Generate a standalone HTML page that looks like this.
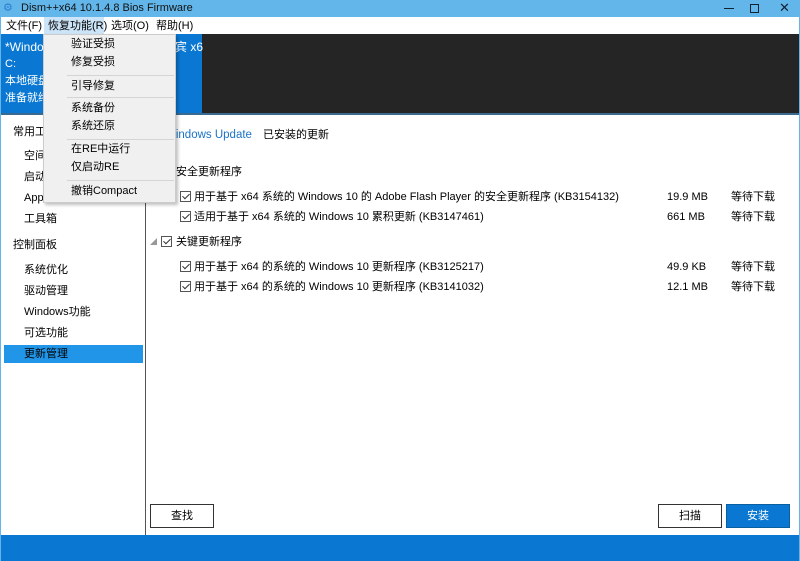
<!DOCTYPE html>
<html><head><meta charset="utf-8"><style>
*{margin:0;padding:0;box-sizing:border-box}
body{width:800px;height:561px;overflow:hidden;position:relative;background:#fff;font-family:"Liberation Sans","Noto Sans CJK SC",sans-serif;font-size:11px;color:#000}
.a{position:absolute;white-space:nowrap;line-height:14px}
.cb{position:absolute;width:11px;height:11px;border:1px solid #555;background:#fff}
.cb:after{content:"";position:absolute;left:3px;top:0px;width:3px;height:6px;border:solid #333;border-width:0 1.3px 1.3px 0;transform:rotate(45deg)}
.btn{position:absolute;height:24px;border:1px solid #333;background:#fff;text-align:center;line-height:22px}
</style></head><body>
<div class="a" style="left:0;top:0;width:800px;height:17px;background:#63b6ea"></div>
<div class="a" style="left:3px;top:1px;color:#2a7fd0;font-size:11px">⚙</div>
<div class="a" style="left:21px;top:1px;font-size:11px;color:#111">Dism++x64 10.1.4.8 Bios Firmware</div>
<div class="a" style="left:724px;top:8px;width:10px;height:1px;background:#123"></div>
<div class="a" style="left:750px;top:4px;width:9px;height:9px;border:1px solid #123"></div>
<div class="a" style="left:779px;top:1px;font-size:13px;color:#123">✕</div>
<div class="a" style="left:0;top:17px;width:800px;height:17px;background:#fff"></div>
<div class="a" style="left:6px;top:19px">文件(F)</div>
<div class="a" style="left:44px;top:17px;width:60px;height:17px;background:#cce4f7"></div>
<div class="a" style="left:48px;top:19px">恢复功能(R)</div>
<div class="a" style="left:111px;top:19px">选项(O)</div>
<div class="a" style="left:156px;top:19px">帮助(H)</div>
<div class="a" style="left:0;top:34px;width:800px;height:80px;background:#252525"></div>
<div class="a" style="left:0;top:34px;width:202px;height:80px;background:#0a78d2"></div>
<div class="a" style="left:0;top:113px;width:800px;height:2px;background:#3a6a90"></div>
<div class="a" style="left:5px;top:40px;color:#fff;font-size:12px">*Windows</div>
<div class="a" style="left:175px;top:40px;color:#fff;font-size:12px">宾 x6</div>
<div class="a" style="left:5px;top:57px;color:#fff">C:</div>
<div class="a" style="left:5px;top:74px;color:#fff">本地硬盘</div>
<div class="a" style="left:5px;top:91px;color:#fff">准备就绪</div>
<div class="a" style="left:145px;top:115px;width:1px;height:420px;background:#555"></div>
<div class="a" style="left:13px;top:125px">常用工具</div>
<div class="a" style="left:24px;top:149px">空间</div>
<div class="a" style="left:24px;top:170px">启动</div>
<div class="a" style="left:24px;top:191px">App</div>
<div class="a" style="left:24px;top:212px">工具箱</div>
<div class="a" style="left:13px;top:238px">控制面板</div>
<div class="a" style="left:24px;top:263px">系统优化</div>
<div class="a" style="left:24px;top:284px">驱动管理</div>
<div class="a" style="left:24px;top:305px">Windows功能</div>
<div class="a" style="left:24px;top:326px">可选功能</div>
<div class="a" style="left:4px;top:345px;width:139px;height:18px;background:#2196e8"></div>
<div class="a" style="left:24px;top:347px">更新管理</div>
<div class="a" style="left:165px;top:128px;color:#1a73c8;font-size:11.5px">Windows Update</div>
<div class="a" style="left:263px;top:128px">已安装的更新</div>
<div class="a" style="left:176px;top:165px">安全更新程序</div>
<div class="cb" style="left:180px;top:191px"></div>
<div class="a" style="left:194px;top:190px">用于基于 x64 系统的 Windows 10 的 Adobe Flash Player 的安全更新程序 (KB3154132)</div>
<div class="a" style="left:667px;top:190px">19.9 MB</div><div class="a" style="left:731px;top:190px">等待下载</div>
<div class="cb" style="left:180px;top:211px"></div>
<div class="a" style="left:194px;top:210px">适用于基于 x64 系统的 Windows 10 累积更新 (KB3147461)</div>
<div class="a" style="left:667px;top:210px">661 MB</div><div class="a" style="left:731px;top:210px">等待下载</div>
<div class="a" style="left:150px;top:236px;font-size:7px;color:#999">◢</div>
<div class="cb" style="left:161px;top:236px"></div>
<div class="a" style="left:176px;top:235px">关键更新程序</div>
<div class="cb" style="left:180px;top:261px"></div>
<div class="a" style="left:194px;top:260px">用于基于 x64 的系统的 Windows 10 更新程序 (KB3125217)</div>
<div class="a" style="left:667px;top:260px">49.9 KB</div><div class="a" style="left:731px;top:260px">等待下载</div>
<div class="cb" style="left:180px;top:281px"></div>
<div class="a" style="left:194px;top:280px">用于基于 x64 的系统的 Windows 10 更新程序 (KB3141032)</div>
<div class="a" style="left:667px;top:280px">12.1 MB</div><div class="a" style="left:731px;top:280px">等待下载</div>
<div class="btn" style="left:150px;top:504px;width:64px">查找</div>
<div class="btn" style="left:658px;top:504px;width:64px">扫描</div>
<div class="btn" style="left:726px;top:504px;width:64px;background:#0a78d2;border-color:#0a5fa0;color:#fff">安装</div>
<div class="a" style="left:0;top:535px;width:800px;height:26px;background:#0a78d2"></div>
<div class="a" style="left:0;top:17px;width:1px;height:544px;background:#63b6ea"></div>
<div class="a" style="left:799px;top:17px;width:1px;height:544px;background:#63b6ea"></div>
<div class="a" style="left:43px;top:34px;width:133px;height:169px;background:#f0f0f0;border:1px solid #ccc;box-shadow:2px 2px 3px rgba(0,0,0,.25)"></div>
<div class="a" style="left:71px;top:37px">验证受损</div>
<div class="a" style="left:71px;top:55px">修复受损</div>
<div class="a" style="left:67px;top:75px;width:107px;height:1px;background:#d4d4d4"></div>
<div class="a" style="left:71px;top:79px">引导修复</div>
<div class="a" style="left:67px;top:97px;width:107px;height:1px;background:#d4d4d4"></div>
<div class="a" style="left:71px;top:101px">系统备份</div>
<div class="a" style="left:71px;top:119px">系统还原</div>
<div class="a" style="left:67px;top:139px;width:107px;height:1px;background:#d4d4d4"></div>
<div class="a" style="left:71px;top:142px">在RE中运行</div>
<div class="a" style="left:71px;top:160px">仅启动RE</div>
<div class="a" style="left:67px;top:180px;width:107px;height:1px;background:#d4d4d4"></div>
<div class="a" style="left:71px;top:184px">撤销Compact</div>
</body></html>
